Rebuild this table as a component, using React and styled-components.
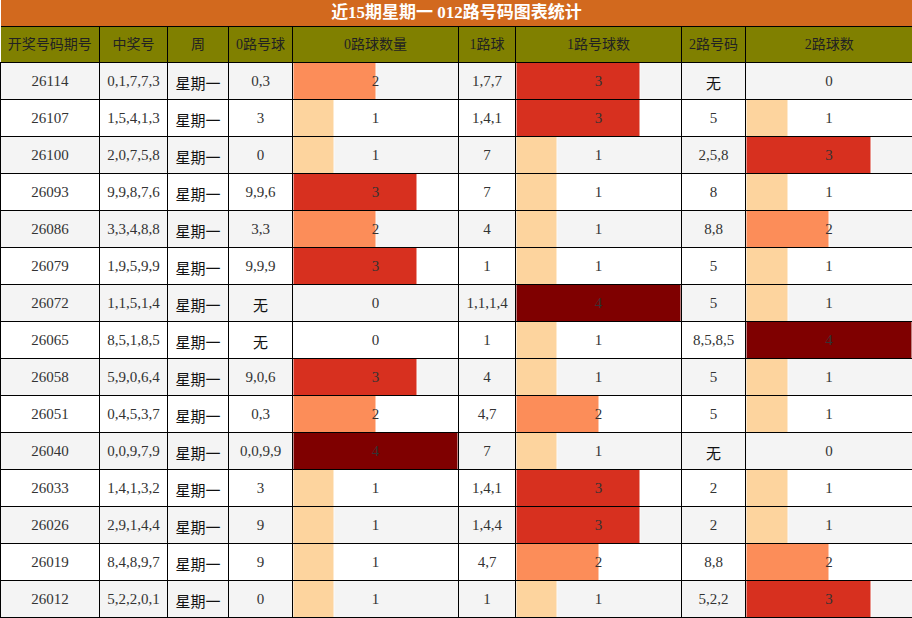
import styled, { createGlobalStyle } from "styled-components";

const GlobalStyle = createGlobalStyle`
  body {
    margin: 0;
    background: #fff;
  }
`;

const barColors = ["transparent", "#fdd49e", "#fc8d59", "#d7301f", "#7f0000"];

const rows = [
  ["26114", "0,1,7,7,3", "0,3", 2, "1,7,7", 3, "无", 0],
  ["26107", "1,5,4,1,3", "3", 1, "1,4,1", 3, "5", 1],
  ["26100", "2,0,7,5,8", "0", 1, "7", 1, "2,5,8", 3],
  ["26093", "9,9,8,7,6", "9,9,6", 3, "7", 1, "8", 1],
  ["26086", "3,3,4,8,8", "3,3", 2, "4", 1, "8,8", 2],
  ["26079", "1,9,5,9,9", "9,9,9", 3, "1", 1, "5", 1],
  ["26072", "1,1,5,1,4", "无", 0, "1,1,1,4", 4, "5", 1],
  ["26065", "8,5,1,8,5", "无", 0, "1", 1, "8,5,8,5", 4],
  ["26058", "5,9,0,6,4", "9,0,6", 3, "4", 1, "5", 1],
  ["26051", "0,4,5,3,7", "0,3", 2, "4,7", 2, "5", 1],
  ["26040", "0,0,9,7,9", "0,0,9,9", 4, "7", 1, "无", 0],
  ["26033", "1,4,1,3,2", "3", 1, "1,4,1", 3, "2", 1],
  ["26026", "2,9,1,4,4", "9", 1, "1,4,4", 3, "2", 1],
  ["26019", "8,4,8,9,7", "9", 1, "4,7", 2, "8,8", 2],
  ["26012", "5,2,2,0,1", "0", 1, "1", 1, "5,2,2", 3],
];

const widths = [99, 68, 61, 64, 166, 57, 166, 64, 167];
const headers = ["开奖号码期号", "中奖号", "周", "0路号球", "0路球数量", "1路球", "1路号球数", "2路号码", "2路球数"];

const Table = styled.table`
  width: 912px;
  border-collapse: collapse;
  table-layout: fixed;
  font-family: "Liberation Serif", "Noto Sans CJK SC", serif;
  font-size: 15px;
  color: #333;
`;

const Title = styled.th`
  height: 26px;
  padding: 0;
  background: #d2691e;
  color: #fff;
  font-size: 17px;
  font-weight: bold;
  line-height: 20px;
  border-bottom: 1px solid #000;
`;

const Head = styled.th`
  height: 35px;
  padding: 0;
  background: #808000;
  color: #222;
  font-weight: normal;
  font-size: 14px;
  line-height: 18px;
  border: 1px solid #000;
  &:first-child {
    border-left: none;
  }
  &:last-child {
    border-right: none;
  }
`;

const Row = styled.tr`
  height: 37px;
  background: ${(p) => (p.$odd ? "#f4f4f4" : "#fff")};
`;

const Cell = styled.td`
  padding: ${(p) => (p.$cjk ? "4px 0 0" : "0")};
  text-align: center;
  border: 1px solid #000;
  line-height: 18px;
  font-family: ${(p) =>
    p.$cjk ? '"Noto Sans CJK SC", sans-serif' : '"Liberation Serif", "Noto Sans CJK SC", serif'};
  font-size: 15px;
  color: ${(p) => (p.$cjk ? "#111" : "#333")};
`;

const BarCell = styled.td`
  padding: 0;
  text-align: center;
  border: 1px solid #000;
  line-height: 18px;
  color: #333;
  background: ${(p) =>
    p.$value > 0
      ? `linear-gradient(to right, ${barColors[p.$value]} 0, ${barColors[p.$value]} calc(${p.$value * 25}% - 1px), rgba(255,255,255,0.6) calc(${p.$value * 25}% - 1px), rgba(255,255,255,0.6) ${p.$value * 25}%, transparent ${p.$value * 25}%)`
      : "transparent"};
`;

const isCjk = (v) => v === "无";

export default function App() {
  return (
    <>
      <GlobalStyle />
      <Table>
        <colgroup>
          {widths.map((w, i) => (
            <col key={i} style={{ width: w }} />
          ))}
        </colgroup>
        <thead>
          <tr>
            <Title colSpan={9}>近15期星期一 012路号码图表统计</Title>
          </tr>
          <tr>
            {headers.map((h) => (
              <Head key={h}>{h}</Head>
            ))}
          </tr>
        </thead>
        <tbody>
          {rows.map((r, i) => (
            <Row key={r[0]} $odd={i % 2 === 0}>
              <Cell>{r[0]}</Cell>
              <Cell>{r[1]}</Cell>
              <Cell $cjk>星期一</Cell>
              <Cell $cjk={isCjk(r[2])}>{r[2]}</Cell>
              <BarCell $value={r[3]}>{r[3]}</BarCell>
              <Cell $cjk={isCjk(r[4])}>{r[4]}</Cell>
              <BarCell $value={r[5]}>{r[5]}</BarCell>
              <Cell $cjk={isCjk(r[6])}>{r[6]}</Cell>
              <BarCell $value={r[7]}>{r[7]}</BarCell>
            </Row>
          ))}
        </tbody>
      </Table>
    </>
  );
}
